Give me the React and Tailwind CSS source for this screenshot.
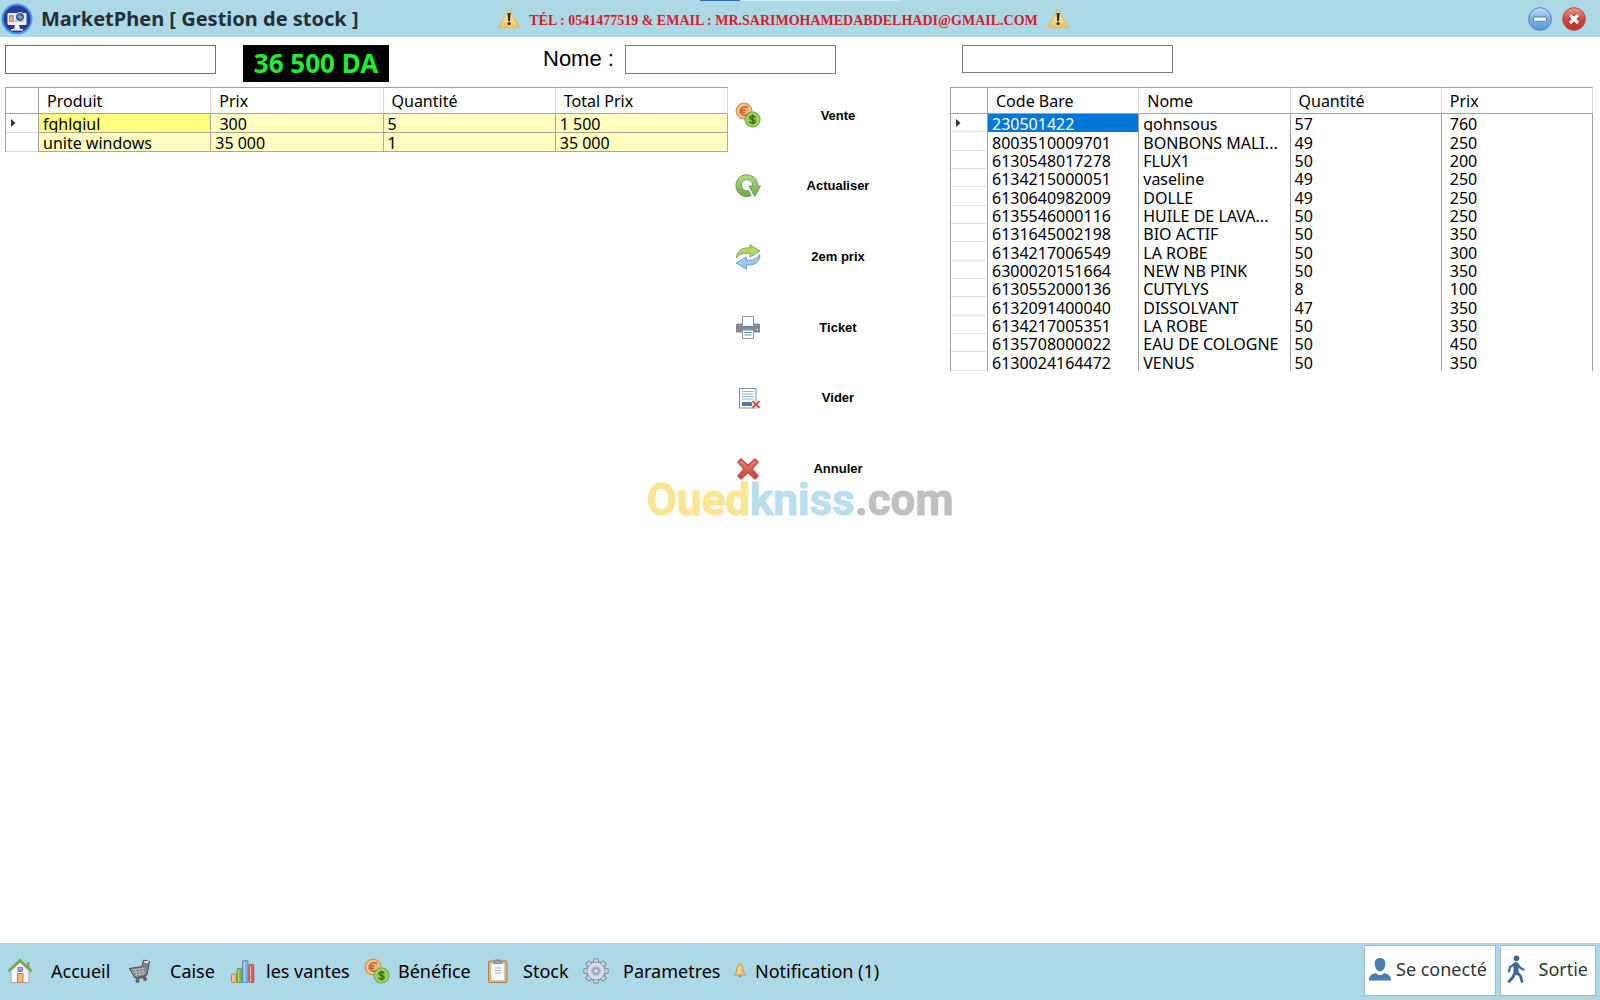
import { useState } from 'react';

const cartRows = [
  ['fghlgiul', '\u00a0300', '5', '1 500'],
  ['unite windows', '35 000', '1', '35 000'],
];

const stockRows = [
  ['230501422', 'gohnsous', '57', '760'],
  ['8003510009701', 'BONBONS MALI...', '49', '250'],
  ['6130548017278', 'FLUX1', '50', '200'],
  ['6134215000051', 'vaseline', '49', '250'],
  ['6130640982009', 'DOLLE', '49', '250'],
  ['6135546000116', 'HUILE DE LAVA...', '50', '250'],
  ['6131645002198', 'BIO ACTIF', '50', '350'],
  ['6134217006549', 'LA ROBE', '50', '300'],
  ['6300020151664', 'NEW NB PINK', '50', '350'],
  ['6130552000136', 'CUTYLYS', '8', '100'],
  ['6132091400040', 'DISSOLVANT', '47', '350'],
  ['6134217005351', 'LA ROBE', '50', '350'],
  ['6135708000022', 'EAU DE COLOGNE', '50', '450'],
  ['6130024164472', 'VENUS', '50', '350'],
];

/* ---------- Icons ---------- */

function LogoIcon() {
  return (
    <svg viewBox="0 0 32 32" className="size-8 shrink-0" aria-hidden="true">
      <circle cx="16" cy="16" r="15.5" fill="#3f9bef" />
      <circle cx="16" cy="16" r="13.5" fill="#2f3a94" />
      <rect x="6.5" y="10" width="19" height="12" rx="1" fill="#e8f3fb" />
      <rect x="8" y="12" width="5" height="7" fill="#5fb7a8" />
      <rect x="9" y="14" width="3" height="4" fill="#f0a468" />
      <rect x="13.5" y="17" width="9" height="2" fill="#9ccbe8" />
      <path d="M14 22h4l1 4h3v1.500H10V26h3z" fill="#f4f8ff" />
      <circle cx="19" cy="14" r="4.500" fill="#2f4f7f" stroke="#d7ecf8" strokeWidth="1" />
      <path d="M16 14h6M19 11v6M17 12l4 4" stroke="#8fd0e8" strokeWidth=".8" />
    </svg>
  );
}

function WarningIcon() {
  return (
    <svg viewBox="0 0 24 22" className="h-[22px] w-6 shrink-0" aria-hidden="true">
      <defs>
        <linearGradient id="warn" x1="0" y1="0" x2="0" y2="1">
          <stop offset="0" stopColor="#fdf6d4" />
          <stop offset="1" stopColor="#f0c55c" />
        </linearGradient>
      </defs>
      <path d="M12 1.500 22.500 19.500H1.500z" fill="url(#warn)" stroke="#dcc07c" strokeWidth="1.500" strokeLinejoin="round" />
      <path d="M10.500 5h3.200l-.7 8h-1.800z" fill="#2e2a20" />
      <circle cx="12.100" cy="15.500" r="1.600" fill="#2e2a20" />
    </svg>
  );
}

function MinimizeIcon() {
  return (
    <svg viewBox="0 0 24 24" className="size-6" aria-hidden="true">
      <defs>
        <linearGradient id="min" x1="0" y1="0" x2="0" y2="1">
          <stop offset="0" stopColor="#c3dcf4" />
          <stop offset=".5" stopColor="#82b1e2" />
          <stop offset="1" stopColor="#5b97d3" />
        </linearGradient>
      </defs>
      <circle cx="12" cy="12" r="11.300" fill="url(#min)" stroke="#5083b8" strokeWidth="1" />
      <rect x="5.500" y="10" width="13" height="4.200" rx=".8" fill="#fff" stroke="#4a7db3" strokeWidth="1" />
    </svg>
  );
}

function CloseIcon() {
  return (
    <svg viewBox="0 0 24 24" className="size-6" aria-hidden="true">
      <defs>
        <linearGradient id="cls" x1="0" y1="0" x2="0" y2="1">
          <stop offset="0" stopColor="#ee9a90" />
          <stop offset=".5" stopColor="#d4473d" />
          <stop offset="1" stopColor="#bb3027" />
        </linearGradient>
      </defs>
      <circle cx="12" cy="12" r="11.300" fill="url(#cls)" stroke="#b04a42" strokeWidth="1" />
      <path d="M8 8l8 8M16 8l-8 8" stroke="#a02820" strokeWidth="5" />
      <path d="M8 8l8 8M16 8l-8 8" stroke="#fff" strokeWidth="3.400" />
    </svg>
  );
}

function CoinsIcon() {
  return (
    <svg viewBox="0 0 26 26" className="size-[26px] shrink-0" aria-hidden="true">
      <circle cx="9" cy="9" r="8" fill="#f2b27c" stroke="#d08a54" />
      <circle cx="9" cy="9" r="6" fill="none" stroke="#f9cfa4" />
      <path d="M13 5.500c-4-2-7 0-7 3.500s3 5.500 7 3.500M4.500 8h6M4.500 10.200h5.500" fill="none" stroke="#b8682c" strokeWidth="1.500" />
      <circle cx="17.500" cy="17.500" r="7.600" fill="#8cc650" stroke="#6aa33a" />
      <circle cx="17.500" cy="17.500" r="5.800" fill="none" stroke="#b5df7c" />
      <path d="M20.300 15.200c-1.200-1.500-5.200-1.500-5.200.5 0 2.200 5 1.300 5 3.700 0 2.200-4.200 2.200-5.500.5M17.600 12.500v10" fill="none" stroke="#3a6e14" strokeWidth="1.500" />
    </svg>
  );
}

function RefreshIcon() {
  return (
    <svg viewBox="0 0 26 26" className="size-[26px] shrink-0" aria-hidden="true">
      <defs>
        <linearGradient id="refresh" x1="0" y1="0" x2="0" y2="1">
          <stop offset="0" stopColor="#b9db90" />
          <stop offset="1" stopColor="#6ca844" />
        </linearGradient>
      </defs>
      <path
        d="M16 22.800A11 11 0 1 1 22.800 13H25.500L19.800 23.500 14 13H17.500A5.600 5.600 0 1 0 13.500 17.600z"
        fill="url(#refresh)"
        stroke="#5e9140"
        strokeWidth=".8"
        strokeLinejoin="round"
      />
    </svg>
  );
}

function SwapIcon() {
  return (
    <svg viewBox="0 0 26 26" className="size-[26px] shrink-0" aria-hidden="true">
      <path d="M1.500 14C1.500 6.500 8 3 15 4V.8L25 7l-10 6V9.500C9 8.500 5 9.500 1.500 14z" fill="#b2d468" stroke="#7a9f48" strokeWidth=".9" strokeLinejoin="round" />
      <path d="M24.800 10.500C25.500 18 19 21.800 11.500 21v4.200L1 19l10.500-6v3.200C17.500 17 21.500 15 24.800 10.500z" fill="#9ccaee" stroke="#6494c4" strokeWidth=".9" strokeLinejoin="round" />
    </svg>
  );
}

function PrinterIcon() {
  return (
    <svg viewBox="0 0 26 26" className="size-[26px] shrink-0" aria-hidden="true">
      <path d="M1 11q0-1.500 1.500-1.500H7v3h12v-3h4.500Q25 9.500 25 11v7.500H1z" fill="#85898d" />
      <rect x="7.500" y="2.500" width="11" height="10" fill="#fff" stroke="#8f99a3" />
      <path d="M7 12.500h12" stroke="#4c86b8" />
      <rect x="7.500" y="16" width="11" height="8.500" fill="#fff" stroke="#8b959f" />
      <path d="M9.500 18.500h7M9.500 21h7" stroke="#5a8fc0" strokeWidth="1.200" />
      <path d="M21.500 15.500h1.500" stroke="#fff" strokeWidth="1.200" />
    </svg>
  );
}

function ClearListIcon() {
  return (
    <svg viewBox="0 0 26 26" className="size-[26px] shrink-0" aria-hidden="true">
      <rect x="4.500" y="3.500" width="16.500" height="19.500" fill="#fff" stroke="#7c8c9c" />
      <path d="M7 6.500h11.500M7 9h11.500M7 11.500h11.500M7 14h11.500" stroke="#93b4d2" strokeWidth="1.200" />
      <rect x="7" y="17" width="10" height="4" fill="#4a7ba3" />
      <path d="M17.500 16l7 7M24.500 16l-7 7" stroke="#fff" strokeWidth="3.600" />
      <path d="M17.500 16l7 7M24.500 16l-7 7" stroke="#cf5345" strokeWidth="2.200" />
    </svg>
  );
}

function CancelIcon() {
  return (
    <svg viewBox="0 0 26 26" className="size-[26px] shrink-0" aria-hidden="true">
      <defs>
        <linearGradient id="cancel" x1="0" y1="0" x2="0" y2="1">
          <stop offset="0" stopColor="#ea8c80" />
          <stop offset="1" stopColor="#c93a30" />
        </linearGradient>
      </defs>
      <path
        d="M6 3 13 9.500 20 3 23 6 17 13 23 20 20 23 13 16.500 6 23 3 20 9 13 3 6z"
        fill="url(#cancel)"
        stroke="#c4544a"
        strokeWidth="1.600"
        strokeLinejoin="round"
      />
    </svg>
  );
}

function HomeIcon() {
  return (
    <svg viewBox="0 0 26 26" className="size-[26px] shrink-0" aria-hidden="true">
      <rect x="20" y="4" width="2.500" height="7" fill="#8a9a8a" />
      <path d="M4 12 13 4l9 8v12.500H4z" fill="#f5f6fc" stroke="#9b9fb5" strokeWidth=".9" />
      <path d="M1.500 13.500 13 2.500 24.500 13.500" fill="none" stroke="#79a64d" strokeWidth="2.800" />
      <rect x="11" y="9.500" width="4.500" height="4" fill="#9aa0e8" stroke="#6a70b8" strokeWidth=".8" />
      <rect x="10.500" y="15.500" width="5.500" height="9" fill="#f0b878" stroke="#bf7f3c" strokeWidth=".9" />
    </svg>
  );
}

function CartIcon() {
  return (
    <svg viewBox="0 0 24 26" className="h-[26px] w-6 shrink-0" aria-hidden="true">
      <path d="M1.500 10.500 14 8.500l1.500-6.500 6 1.500-2.500 13.500L7 20z" fill="#808286" stroke="#4a4c50" strokeWidth="1" strokeLinejoin="round" />
      <path d="M3.500 12 17 10M4.500 14.500l13-1.500M6 17l11-1.500M7 11l2.500 8M11 10.500l1.500 8M15 10v7.500" stroke="#c4c6ca" strokeWidth=".8" />
      <path d="M16.500 4h4" stroke="#f3f3f3" strokeWidth="1.800" />
      <path d="M8 20.500l10-2" stroke="#5a5c60" strokeWidth="1.800" />
      <circle cx="9.500" cy="23" r="2" fill="#5b5d62" />
      <circle cx="17" cy="21" r="2" fill="#5b5d62" />
    </svg>
  );
}

function ChartIcon() {
  return (
    <svg viewBox="0 0 26 26" className="size-[26px] shrink-0" aria-hidden="true">
      <rect x="1.500" y="16" width="5" height="8.500" rx="1" fill="#f0b070" stroke="#b9793a" strokeWidth=".8" />
      <rect x="7" y="10.500" width="5" height="14" rx="1" fill="#7cb84c" stroke="#5c8f38" strokeWidth=".8" />
      <rect x="12.500" y="2.500" width="5.500" height="22" rx="1" fill="#7fb1e4" stroke="#557fb8" strokeWidth=".8" />
      <rect x="18.800" y="6.500" width="5" height="18" rx="1" fill="#d8605a" stroke="#a84a48" strokeWidth=".8" />
      <path d="M3 17v7M8.700 12v12M14.500 4v20M20.500 8v16" stroke="#fff" strokeOpacity=".5" />
    </svg>
  );
}

function ClipboardIcon() {
  return (
    <svg viewBox="0 0 22 26" className="h-[26px] w-[22px] shrink-0" aria-hidden="true">
      <rect x="1.500" y="3" width="18.500" height="21.500" rx="1" fill="#e3b56e" stroke="#a97a36" strokeWidth=".9" />
      <rect x="4" y="5" width="13.500" height="17.500" fill="#fafbff" stroke="#b9bdd0" strokeWidth=".6" />
      <path d="M6.500 5.500 8.500 2h4.500l2 3.500z" fill="#9aa2b8" stroke="#6a728c" strokeWidth=".8" />
      <path d="M8 10h6M8 12.500h6M8 15h6" stroke="#9aaad0" strokeWidth="1.200" />
    </svg>
  );
}

function GearIcon() {
  return (
    <svg viewBox="0 0 26 26" className="size-[26px] shrink-0" aria-hidden="true">
      <g fill="#cfd5e4" stroke="#7f88a4" strokeWidth="1">
        {[0, 45, 90, 135, 180, 225, 270, 315].map((deg) => (
          <path key={deg} d="M9.800 5 11 .8h4l1.200 4.200z" transform={`rotate(${deg} 13 13)`} />
        ))}
        <circle cx="13" cy="13" r="9" />
      </g>
      <circle cx="13" cy="13" r="8.500" fill="#d8ddea" />
      <circle cx="13" cy="13" r="4.800" fill="#a9b1c6" />
      <circle cx="13" cy="13" r="2.600" fill="#c4dfea" stroke="#7f88a4" strokeWidth=".8" />
    </svg>
  );
}

function BellIcon() {
  return (
    <svg viewBox="0 0 14 16" className="h-4 w-3.5 shrink-0" aria-hidden="true">
      <path d="M7 1c-2 0-2.800 2-3 5-.2 3-1.500 4.500-3 6h12c-1.500-1.500-2.800-3-3-6C9.800 3 9 1 7 1z" fill="#ecc473" stroke="#c0954a" strokeWidth=".8" />
      <path d="M6 3.500v7.500" stroke="#fbe9bd" strokeWidth="1.200" />
      <path d="M5.500 12.500a1.500 1.500 0 0 0 3 0z" fill="#a87c34" />
    </svg>
  );
}

function UserIcon() {
  return (
    <svg viewBox="0 0 22 24" className="h-6 w-[22px] shrink-0" fill="#4a7db5" aria-hidden="true">
      <path d="M11 1c3.500 0 5.500 2.300 5.300 6-.2 4-2.600 7.500-5.300 7.500S5.900 11 5.700 7C5.500 3.300 7.500 1 11 1z" />
      <path d="M0 23.500c0-5 2.500-6.500 7-7.500 1 1.500 2.500 2 4 2s3-.5 4-2c4.500 1 7 2.500 7 7.500z" />
    </svg>
  );
}

function WalkIcon() {
  return (
    <svg viewBox="0 0 18 28" className="h-7 w-[18px] shrink-0" fill="none" stroke="#3d6398" strokeLinecap="round" strokeLinejoin="round" aria-hidden="true">
      <circle cx="9.500" cy="3.300" r="2.800" fill="#3d6398" stroke="none" />
      <path d="M9 9.500v8" strokeWidth="5" />
      <path d="M7 9.500 3 12l-1 4.500M11 10l2.500 3 3 1.500" strokeWidth="2.200" />
      <path d="M8 18l-2 4-4 4.500M10 17.500l3.500 3.500 1.500 5.500" strokeWidth="2.800" />
    </svg>
  );
}

/* ---------- Grid ---------- */

function RowMarker() {
  return (
    <svg viewBox="0 0 5 8" className="ml-[5px] h-2 w-[5px]" aria-hidden="true">
      <path d="M0 0l4.500 4L0 8z" fill="#333" />
    </svg>
  );
}

function HeadCells({ titles }) {
  return (
    <thead>
      <tr className="h-[27px]">
        <th className="border-y border-r border-[#a0a0a0] p-0" />
        {titles.map((title) => (
          <th
            key={title}
            scope="col"
            className="border-y border-r border-y-[#a0a0a0] border-r-[#dcdcdc] p-0 pl-2 text-left font-normal leading-6"
          >
            {title}
          </th>
        ))}
      </tr>
    </thead>
  );
}

// The current row clips its descenders at the cell edge
function CellText({ current, children }) {
  return (
    <div className={`h-[18px] leading-5 whitespace-nowrap ${current ? 'overflow-hidden' : ''}`}>{children}</div>
  );
}

function CartTable() {
  return (
    <table className="w-full table-fixed border-separate border-spacing-0 border-l border-[#a0a0a0] text-base">
      <colgroup>
        <col className="w-[33px]" />
        <col />
        <col />
        <col />
        <col />
      </colgroup>
      <HeadCells titles={['Produit', 'Prix', 'Quantité', 'Total Prix']} />
      <tbody>
        {cartRows.map((row, r) => (
          <tr key={row[0]}>
            <td className="border-r border-b border-r-[#a0a0a0] border-b-[#dcdcdc] p-0 align-middle">
              {r === 0 && <RowMarker />}
            </td>
            {row.map((value, c) => (
              <td
                key={c}
                className={`border-r border-b border-[#a8a890] p-0 pl-1 ${
                  r === 0 && c === 0 ? 'bg-[#ffff80]' : 'bg-[#ffffc0]'
                }`}
              >
                <CellText current={r === 0}>{value}</CellText>
              </td>
            ))}
          </tr>
        ))}
      </tbody>
    </table>
  );
}

function StockTable() {
  return (
    <table className="h-[284px] w-full table-fixed border-separate border-spacing-0 border-l border-[#a0a0a0] text-base">
      <colgroup>
        <col className="w-[37px]" />
        <col />
        <col />
        <col />
        <col />
      </colgroup>
      <HeadCells titles={['Code Bare', 'Nome', 'Quantité', 'Prix']} />
      <tbody>
        {stockRows.map((row, r) => (
          <tr key={row[0]}>
            <td className="border-r border-b border-r-[#a0a0a0] border-b-[#e2e2e2] p-0 align-middle">
              {r === 0 && <RowMarker />}
            </td>
            {row.map((value, c) => (
              <td
                key={c}
                className={`border-r border-[#a0a0a0] p-0 ${c === 3 ? 'pl-2' : 'pl-1'} ${
                  r === 0 && c === 0 ? 'bg-[#0078d7] text-white' : ''
                }`}
              >
                <CellText current={r === 0}>{value}</CellText>
              </td>
            ))}
          </tr>
        ))}
      </tbody>
    </table>
  );
}

/* ---------- Actions and navigation ---------- */

const actions = [
  { label: 'Vente', Icon: CoinsIcon },
  { label: 'Actualiser', Icon: RefreshIcon },
  { label: '2em prix', Icon: SwapIcon },
  { label: 'Ticket', Icon: PrinterIcon },
  { label: 'Vider', Icon: ClearListIcon },
  { label: 'Annuler', Icon: CancelIcon },
];

const navItems = [
  { label: 'Accueil', Icon: HomeIcon, className: 'gap-[18px] w-[121px]' },
  { label: 'Caise', Icon: CartIcon, className: 'gap-[18px] w-[102px]' },
  { label: 'les vantes', Icon: ChartIcon, className: 'gap-[10px] w-[134px]' },
  { label: 'Bénéfice', Icon: CoinsIcon, className: 'gap-2 w-[123px]' },
  { label: 'Stock', Icon: ClipboardIcon, className: 'gap-[14px] w-[96px]' },
  { label: 'Parametres', Icon: GearIcon, className: 'gap-[14px] w-[150px]' },
  { label: 'Notification (1)', Icon: BellIcon, className: 'gap-2' },
];

export default function App() {
  const [scan, setScan] = useState('');
  const [name, setName] = useState('');
  const [search, setSearch] = useState('');

  return (
    <div className="flex min-h-screen flex-col bg-white font-['Noto_Sans',sans-serif] text-black">
      {/* Title bar */}
      <header className="relative flex h-[37px] items-center justify-between bg-[#add8e6] pr-[14px] pl-px">
        <div className="flex flex-1 items-center gap-2">
          <LogoIcon />
          <h1 className="text-xl font-bold whitespace-nowrap text-[#1f3038]">MarketPhen [ Gestion de stock ]</h1>
        </div>
        <div className="flex items-center gap-2 pr-5">
          <WarningIcon />
          <p className="pt-1 font-['Liberation_Serif',serif] text-sm font-bold whitespace-nowrap text-[#cf1f2c]">
            TÉL : 0541477519 &amp; EMAIL : MR.SARIMOHAMEDABDELHADI@GMAIL.COM
          </p>
          <WarningIcon />
        </div>
        <div className="flex flex-1 items-center justify-end gap-[10px]">
          <button type="button" aria-label="Réduire"><MinimizeIcon /></button>
          <button type="button" aria-label="Fermer"><CloseIcon /></button>
        </div>
        <div className="absolute top-0 left-[700px] flex h-px">
          <span className="w-10 bg-[#2f6fae]" />
          <span className="w-40 bg-[#d3e8f0]" />
        </div>
      </header>

      <main className="flex-1 pt-2 pr-[7px] pl-[5px]">
        {/* Search fields */}
        <div className="grid h-[42px] grid-cols-[945fr_643fr] items-start">
          <div className="flex items-start">
            <input
              type="text"
              aria-label="Code bare"
              value={scan}
              onChange={(e) => setScan(e.target.value)}
              className="h-[29px] w-[211px] border border-[#3d7ba8] px-1 outline-none"
            />
            <output className="ml-[27px] flex h-[37px] w-[146px] items-center justify-center bg-black text-[26px] font-bold whitespace-nowrap text-[#1fee2f]">
              36 500 DA
            </output>
            <label htmlFor="nome" className="ml-[154px] font-['Liberation_Sans',sans-serif] text-[22px] leading-7 whitespace-nowrap">
              Nome :
            </label>
            <input
              id="nome"
              type="text"
              value={name}
              onChange={(e) => setName(e.target.value)}
              className="ml-[11px] h-[29px] w-[211px] border border-[#7a7a7a] px-1 outline-none"
            />
          </div>
          <input
            type="text"
            aria-label="Recherche"
            value={search}
            onChange={(e) => setSearch(e.target.value)}
            className="ml-3 h-7 w-[211px] border border-[#7a7a7a] px-1 outline-none"
          />
        </div>

        {/* Cart, actions, stock */}
        <div className="grid grid-cols-[723fr_222fr_643fr] items-start">
          <CartTable />
          <div className="grid h-[410px] grid-rows-6 gap-[14px]">
            {actions.map(({ label, Icon }) => (
              <button
                key={label}
                type="button"
                className="grid grid-cols-[40px_1fr_42px] items-center font-['Liberation_Sans',sans-serif] text-[13px] font-bold"
              >
                <span className="flex justify-center"><Icon /></span>
                <span>{label}</span>
              </button>
            ))}
          </div>
          <StockTable />
        </div>
      </main>

      {/* Watermark */}
      <div className="pointer-events-none fixed inset-0 flex items-center justify-center font-[Roboto,sans-serif] text-[44px] font-bold opacity-90">
        <span className="text-[#fbe38a] [-webkit-text-stroke:1px_#fbe38a]">Oued</span>
        <span className="text-[#b2dcee] [-webkit-text-stroke:1px_#b2dcee]">kniss</span>
        <span className="text-[#b9b9b9] [-webkit-text-stroke:1px_#b9b9b9]">.com</span>
      </div>

      {/* Bottom bar */}
      <footer className="flex h-[57px] items-start justify-between bg-[#add8e6] pt-0.5 pr-1 pl-[7px]">
        <nav className="flex h-[51px] items-center text-lg">
          {navItems.map(({ label, Icon, className }) => (
            <a key={label} href="#" className={`flex items-center whitespace-nowrap ${className}`}>
              <Icon />
              {label}
            </a>
          ))}
        </nav>
        <div className="flex gap-1 text-lg text-[#333]">
          <button type="button" className="flex h-[51px] w-[132px] items-center gap-[5px] border border-[#9fb4be] bg-white pb-1 pl-1 whitespace-nowrap">
            <UserIcon />
            Se conecté
          </button>
          <button type="button" className="flex h-[51px] w-24 items-center justify-between border border-[#9fb4be] bg-white pr-[7px] pb-1 pl-1.5 whitespace-nowrap">
            <WalkIcon />
            Sortie
          </button>
        </div>
      </footer>
    </div>
  );
}
